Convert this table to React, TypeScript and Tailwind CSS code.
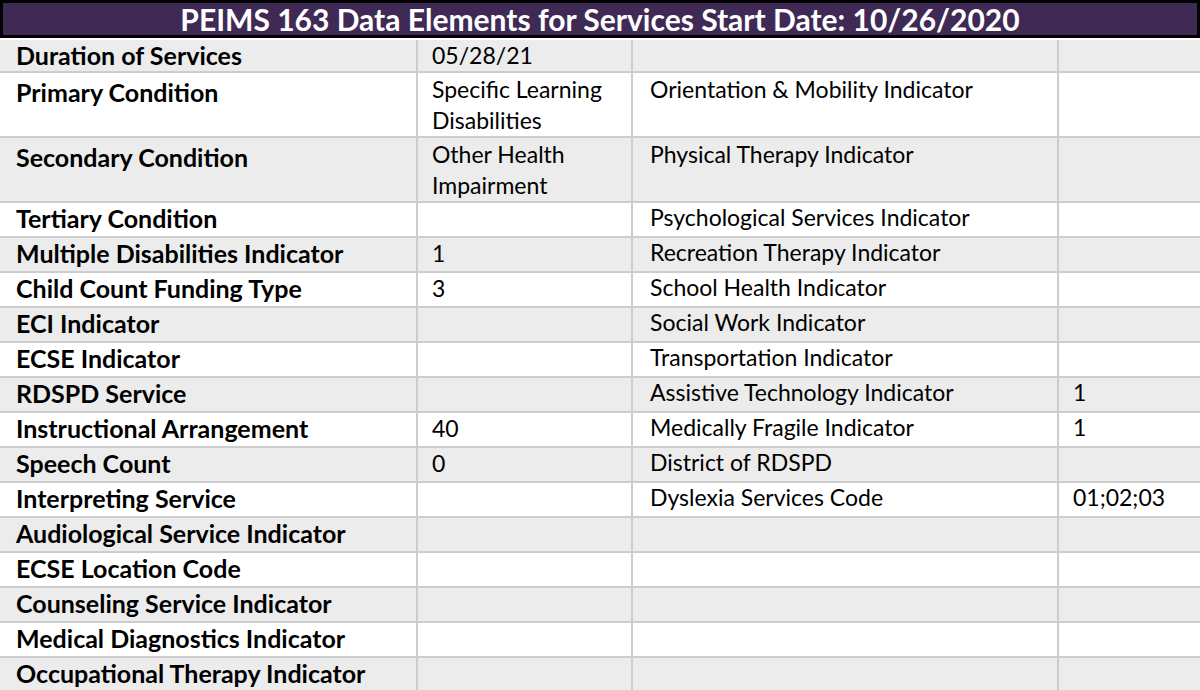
import React from 'react';

interface Row {
  label: string;
  value?: string;
  other?: string;
  otherValue?: string;
  tall?: boolean;
}

const rows: Row[] = [
  { label: 'Duration of Services', value: '05/28/21' },
  { label: 'Primary Condition', value: 'Specific Learning Disabilities', other: 'Orientation & Mobility Indicator', tall: true },
  { label: 'Secondary Condition', value: 'Other Health Impairment', other: 'Physical Therapy Indicator', tall: true },
  { label: 'Tertiary Condition', other: 'Psychological Services Indicator' },
  { label: 'Multiple Disabilities Indicator', value: '1', other: 'Recreation Therapy Indicator' },
  { label: 'Child Count Funding Type', value: '3', other: 'School Health Indicator' },
  { label: 'ECI Indicator', other: 'Social Work Indicator' },
  { label: 'ECSE Indicator', other: 'Transportation Indicator' },
  { label: 'RDSPD Service', other: 'Assistive Technology Indicator', otherValue: '1' },
  { label: 'Instructional Arrangement', value: '40', other: 'Medically Fragile Indicator', otherValue: '1' },
  { label: 'Speech Count', value: '0', other: 'District of RDSPD' },
  { label: 'Interpreting Service', other: 'Dyslexia Services Code', otherValue: '01;02;03' },
  { label: 'Audiological Service Indicator' },
  { label: 'ECSE Location Code' },
  { label: 'Counseling Service Indicator' },
  { label: 'Medical Diagnostics Indicator' },
  { label: 'Occupational Therapy Indicator' },
];

const App: React.FC = () => {
  return (
    <div className="w-[1200px] h-[690px] overflow-hidden bg-white font-['Lato',sans-serif] text-black">
      {/* Title bar */}
      <div className="h-[38px] bg-[#3f2a56] border-[3px] border-black flex items-center justify-center">
        <h1 className="text-[30px] font-bold text-white leading-none">
          PEIMS 163 Data Elements for Services Start Date: 10/26/2020
        </h1>
      </div>

      <table className="w-full mt-[2px] border-collapse table-fixed">
        <colgroup>
          <col className="w-[417px]" />
          <col className="w-[215px]" />
          <col className="w-[426px]" />
          <col className="w-[142px]" />
        </colgroup>
        <tbody>
          {rows.map((row, i) => (
            <tr
              key={row.label}
              className={`${i % 2 === 0 ? 'bg-[#ececec]' : 'bg-white'} ${row.tall ? (i === 1 ? 'h-[65px]' : 'h-[64px]') : i === 0 ? 'h-[32px]' : 'h-[35px]'}`}
            >
              <td className={`border-2 border-l-0 border-t-0 border-[#cdcdcd] align-top pl-[16px] ${row.tall ? 'pt-[5px]' : 'pt-[1px]'} text-[25px] font-bold leading-[29px] whitespace-nowrap`}>
                {row.label}
              </td>
              <td className={`border-2 border-t-0 border-[#cdcdcd] align-top pl-[14px] pr-2 ${row.tall ? 'pt-[1px]' : ''} text-[23px] leading-[31px]`}>
                {row.value}
              </td>
              <td className={`border-2 border-t-0 border-[#cdcdcd] align-top pl-[17px] ${row.tall ? 'pt-[2px]' : ''} text-[23px] leading-[29px] whitespace-nowrap`}>
                {row.other}
              </td>
              <td className="border-2 border-r-0 border-t-0 border-[#cdcdcd] align-top pl-[14px] text-[23px] leading-[29px]">
                {row.otherValue}
              </td>
            </tr>
          ))}
        </tbody>
      </table>
    </div>
  );
};

export default App;
